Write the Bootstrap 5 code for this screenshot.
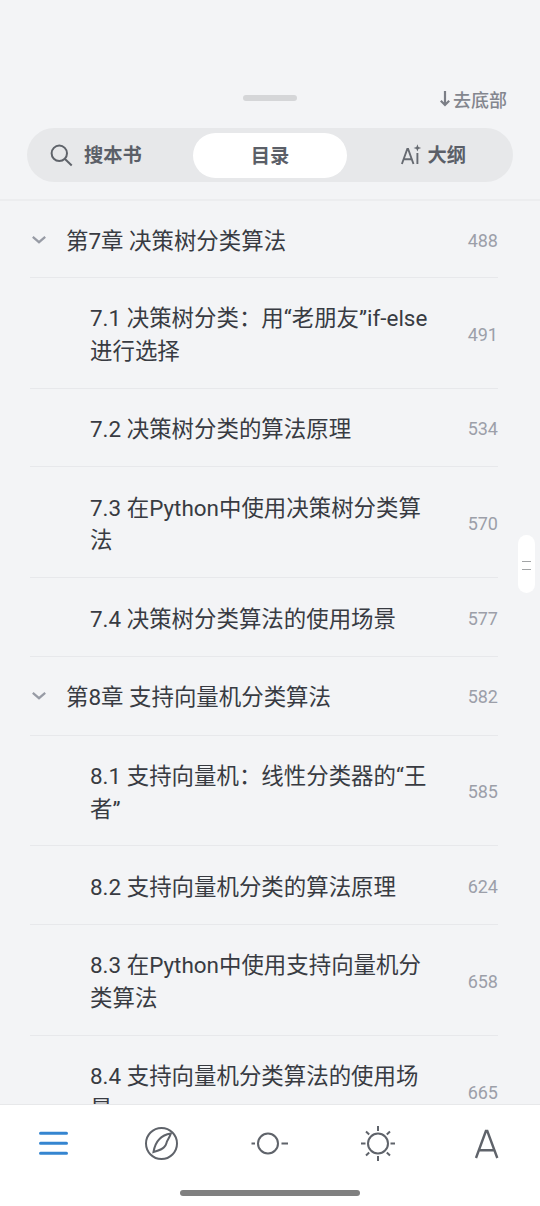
<!DOCTYPE html>
<html lang="zh-CN">
<head>
<meta charset="utf-8">
<meta name="viewport" content="width=device-width, initial-scale=1">
<title>目录</title>
<link href="https://cdn.jsdelivr.net/npm/bootstrap@5.3.0/dist/css/bootstrap.min.css" rel="stylesheet">
<style>
  body { font-family: Roboto, "Noto Sans CJK SC", sans-serif; background: #f3f4f6; color: #383b42; }
  .reader { height: 1206px; }
  .sheet-head { height: 128px; padding: 86px 33px 0 0; }
  .grip { width: 54px; height: 6px; background: #d5d6d8; left: 243px; top: 95px; }
  .to-bottom { font-size: 18px; line-height: 27px; font-weight: 500; color: #83868e; }
  .to-bottom span { padding-top: 1px; }
  .tabs { height: 54px; margin: 0 27px; padding: 5px 13px; background: #e7e8ea; font-size: 19.3px; font-weight: 700; color: #5b5f68; }
  .tabs span { padding-top: 3px; }
  .tabs .tab-side { width: 153px; }
  .tabs .tab-on { width: 154px; height: 45px; background: #fff; }
  .tabs .tab-end { padding-right: 34px; }
  .toc { margin-top: 17px; border-top: 2px solid #ecedef; }
  .toc-row { height: 78.6px; margin: 0 42px 0 30px; padding-top: 4px; border-bottom: 1px solid #e7e8eb; font-size: 22.45px; line-height: 32.6px; }
  .toc-row.tall { height: 110.9px; }
  .toc-row:first-child { height: 77px; padding-top: 4px; }
  .toc-row .fold { width: 36px; margin-top: -3px; }
  .toc-row .sub { padding-left: 60px; }
  .toc-row .pg { font-size: 18px; color: #9c9fa9; }
  .side-handle { width: 17px; height: 58px; left: 518px; top: 535px; gap: 7px; padding-top: 3px; }
  .side-handle i { width: 9px; height: 1px; background: #a2a4a6; }
  .dock { height: 102px; background: #fff; border-top: 1px solid #e7e8ea; }
  .dock svg { margin-top: 20px; }
  .home-bar { width: 180px; height: 6px; background: #808080; left: 180px; top: 1189.5px; }
</style>
</head>
<body>
<div class="reader position-relative overflow-hidden d-flex flex-column">
  <header class="sheet-head d-flex justify-content-end flex-shrink-0">
    <div class="grip position-absolute rounded-pill"></div>
    <div class="to-bottom d-flex"><svg width="14" height="27" viewBox="0 0 14 27" fill="none" stroke="#7b7e86" stroke-width="2.2"><path d="M6 5v14M1.8 14.8 6 19l4.2-4.2"/></svg><span>去底部</span></div>
  </header>

  <nav class="tabs rounded-pill d-flex flex-shrink-0">
    <div class="tab-side d-flex align-items-center">
      <svg class="ms-2 flex-shrink-0" width="36" height="30" viewBox="0 0 36 30" fill="none" stroke="#5f636a" stroke-width="2"><circle cx="11.3" cy="13.3" r="7.7"/><path d="m17 19 6.7 6.5"/></svg><span>搜本书</span>
    </div>
    <div class="tab-on rounded-pill d-flex align-items-center justify-content-center"><span>目录</span></div>
    <div class="tab-side tab-end d-flex align-items-center justify-content-end">
      <svg width="26" height="26" viewBox="0 0 26 26" fill="none" stroke="#666a71" stroke-width="1.9"><path d="m.9 22 5.4-15h.8l5.4 15M2.8 17.2h7.8M16.4 11V22"/><path d="m16.4 2.2 1 2.7 2.8 1-2.8 1-1 2.7-1-2.7-2.8-1 2.8-1z" fill="#666a71" stroke="none"/></svg><span>大纲</span>
    </div>
  </nav>

  <main class="toc flex-grow-1 overflow-hidden">
    <div class="toc-row d-flex align-items-center">
      <svg class="fold" height="20" viewBox="0 0 36 20" fill="none" stroke="#979ba5" stroke-width="2.2"><path d="m2.8 6.8 6.2 5.4 6.2-5.4"/></svg>
      <span>第7章 决策树分类算法</span><span class="pg ms-auto">488</span>
    </div>
    <div class="toc-row tall d-flex align-items-center"><span class="sub">7.1 决策树分类：用“老朋友”if-else<br>进行选择</span><span class="pg ms-auto">491</span></div>
    <div class="toc-row d-flex align-items-center"><span class="sub">7.2 决策树分类的算法原理</span><span class="pg ms-auto">534</span></div>
    <div class="toc-row tall d-flex align-items-center"><span class="sub">7.3 在Python中使用决策树分类算<br>法</span><span class="pg ms-auto">570</span></div>
    <div class="toc-row d-flex align-items-center"><span class="sub">7.4 决策树分类算法的使用场景</span><span class="pg ms-auto">577</span></div>
    <div class="toc-row d-flex align-items-center">
      <svg class="fold" height="20" viewBox="0 0 36 20" fill="none" stroke="#979ba5" stroke-width="2.2"><path d="m2.8 6.8 6.2 5.4 6.2-5.4"/></svg>
      <span>第8章 支持向量机分类算法</span><span class="pg ms-auto">582</span>
    </div>
    <div class="toc-row tall d-flex align-items-center"><span class="sub">8.1 支持向量机：线性分类器的“王<br>者”</span><span class="pg ms-auto">585</span></div>
    <div class="toc-row d-flex align-items-center"><span class="sub">8.2 支持向量机分类的算法原理</span><span class="pg ms-auto">624</span></div>
    <div class="toc-row tall d-flex align-items-center"><span class="sub">8.3 在Python中使用支持向量机分<br>类算法</span><span class="pg ms-auto">658</span></div>
    <div class="toc-row tall d-flex align-items-center"><span class="sub">8.4 支持向量机分类算法的使用场<br>景</span><span class="pg ms-auto">665</span></div>
  </main>

  <footer class="dock d-flex justify-content-around align-items-start flex-shrink-0">
    <svg width="38" height="38" viewBox="0 0 38 38" fill="none" stroke="#3585d0" stroke-width="3" stroke-linecap="round"><path d="M5.5 8.3h26M5.5 18.3h26M5.5 28.3h26"/></svg>
    <svg width="38" height="38" viewBox="0 0 38 38" fill="none" stroke="#5f636a" stroke-width="2"><circle cx="18.5" cy="18.5" r="15.5"/><path d="M27.8 8.6C18.5 10 12.5 15.5 10.5 27c4.5-1.4 8-2.2 10.5-4.8 2.3-2.4 2.2-3.2 2.7-5 .6-2 2.2-3.3 4.1-8.6z"/></svg>
    <svg width="38" height="38" viewBox="0 0 38 38" fill="none" stroke="#5f636a" stroke-width="2"><circle cx="17" cy="18.5" r="10"/><path d="M.5 18.5H4M30.5 18.5h6.5"/></svg>
    <svg width="38" height="38" viewBox="0 0 38 38" fill="none" stroke="#5f636a" stroke-width="2"><circle cx="19" cy="18.5" r="10"/><path d="M19 1v5M19 31v5M2 18.5h4.5M31.5 18.5H36M7 6.5l3.2 3M31 6.5l-3.2 3M7 30.5l3.2-3M31 30.5l-3.2-3"/></svg>
    <svg width="38" height="38" viewBox="0 0 38 38" fill="none" stroke="#5f636a" stroke-width="2.4"><path d="M9 33 18.9 6h1.4L30.3 33M12.4 25.2h14.5"/></svg>
  </footer>

  <div class="side-handle position-absolute bg-white rounded-pill d-flex flex-column align-items-center justify-content-center"><i></i><i></i></div>
  <div class="home-bar position-absolute rounded-pill"></div>
</div>
<script src="https://cdn.jsdelivr.net/npm/bootstrap@5.3.0/dist/js/bootstrap.bundle.min.js"></script>
</body>
</html>
